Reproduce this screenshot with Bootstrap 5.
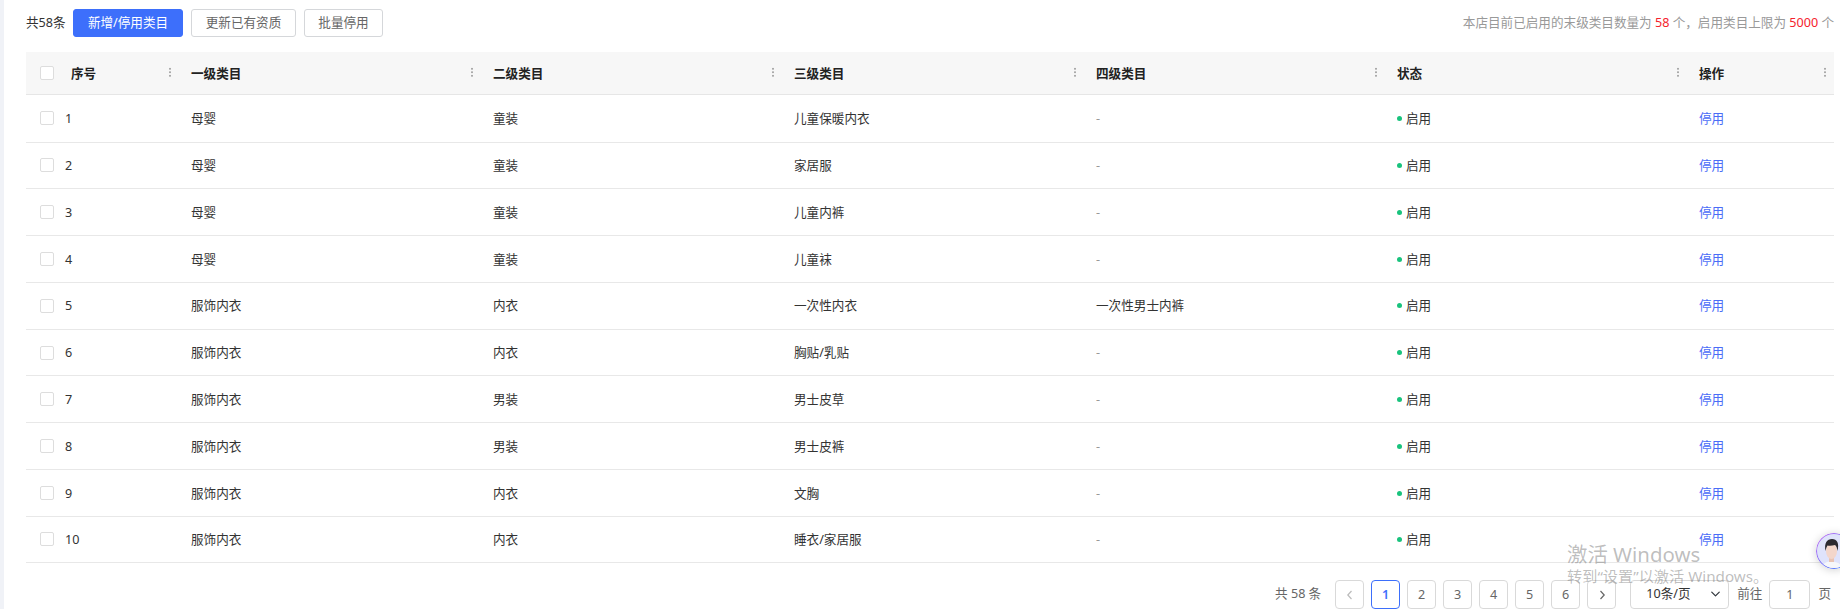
<!DOCTYPE html>
<html lang="zh">
<head>
<meta charset="utf-8">
<title>类目</title>
<link href="https://cdn.jsdelivr.net/npm/bootstrap@5.3.0/dist/css/bootstrap.min.css" rel="stylesheet">
<style>
html,body{height:609px;overflow:hidden}
body{font-family:"Noto Sans","Noto Sans CJK SC",sans-serif;font-size:12.6px;color:#333;background:#fff;position:relative}
.strip{width:4px;background:#f0f2f7;flex:none}
.main{padding:9px 6px 0 22px;flex:1;min-width:0}
.toolbar{height:28px;margin-bottom:15px}
.count{margin-right:8px;width:39px;white-space:nowrap}
.btn-s{font-size:12.6px;height:28px;padding:0;line-height:26px;border-radius:3px;border:1px solid #d5d7da;color:#666;background:#fff}
.btn-p{background:#3d6ffb;border-color:#3d6ffb;color:#fff;width:110px}
.w105{width:105px}.w79{width:79px}
.tip{color:#999}.tip b{color:#f5222d;font-weight:400}
.cat{table-layout:fixed;width:1808px;margin:0;font-size:12.6px;--bs-table-color:#333}
.cat th{height:42px;background:#f7f7f7;font-weight:700;color:#222;padding:3px 12px 0;border-bottom:1px solid #e6e6e6;position:relative;vertical-align:middle}
.cat td{height:46.8px;padding:2px 12px 0;border-bottom:1px solid #e8e8e8;vertical-align:middle}
.cat tbody tr:first-child td{height:48px}
.cat tbody tr:last-child td{height:46px}
.cat .c0{padding:0 12px 0 14px}
.box{width:14px;height:14px;border:1px solid #ddd;border-radius:2px;background:#fff;flex:none;display:block}
.num{padding-top:2px}
th .num{margin-left:17px;padding-top:3px}td .num{margin-left:11px}
.grip{position:absolute;right:8px;top:15px;width:2px;height:10px;background-image:radial-gradient(circle,#aaa 1px,transparent 1px);background-size:2px 3.5px}
.dash{color:#999}
.dot{width:5px;height:5px;border-radius:50%;background:#19c37d;display:inline-block;margin-right:4px;vertical-align:2px}
.op{color:#4a6cf7;text-decoration:none}
.foot{margin-top:17px;height:29px;padding-right:3px;color:#666}
.foot .pagination{--bs-pagination-font-size:12.6px;gap:7px;margin:0 0 0 14px}
.foot .page-link{width:29px;height:29px;padding:0;line-height:27px;text-align:center;color:#666;border:1px solid #d9d9d9;border-radius:4px!important;margin:0!important;background:#fff}
.foot .active .page-link{color:#3d6ffb;border-color:#3d6ffb;background:#fff;font-weight:600}
.foot .disabled .page-link{color:#bbb}
.foot svg{display:inline-block;vertical-align:-1px}
.foot .form-select{width:99px;height:29px;font-size:12.6px;padding:0 0 0 15px;margin-left:14px;border-color:#d9d9d9;border-radius:4px;color:#333;background-position:right 6px center;background-size:13px 10px}
.go{width:41px;height:29px;margin:0 8px 0 7px;font-size:12.6px;text-align:center;padding:0;border-color:#d9d9d9;border-radius:4px;color:#666}
.wm{position:absolute;left:1567px;top:544px;color:rgba(110,110,110,.45);pointer-events:none;line-height:1}
.wm .a{font-size:20.4px;margin-bottom:5px;white-space:nowrap}
.wm .b{font-size:15.2px;white-space:nowrap}
.ava{position:absolute;left:1816px;top:533px;width:36px;height:36px;border-radius:50%;box-shadow:0 1px 8px rgba(0,0,0,.18)}
</style>
</head>
<body class="d-flex">
<div class="strip"></div>
<div class="main">
  <div class="toolbar d-flex align-items-center">
    <span class="count">共58条</span>
    <button class="btn btn-s btn-p">新增/停用类目</button>
    <button class="btn btn-s w105 ms-2">更新已有资质</button>
    <button class="btn btn-s w79 ms-2">批量停用</button>
    <span class="tip ms-auto">本店目前已启用的末级类目数量为 <b>58</b> 个，启用类目上限为 <b>5000</b> 个</span>
  </div>
  <table class="table cat">
    <colgroup><col style="width:153px"><col style="width:302px"><col style="width:301px"><col style="width:302px"><col style="width:301px"><col style="width:302px"><col></colgroup>
    <thead><tr>
      <th class="c0"><div class="d-flex align-items-center"><span class="box"></span><span class="num">序号</span></div><i class="grip"></i></th>
      <th>一级类目<i class="grip"></i></th><th>二级类目<i class="grip"></i></th><th>三级类目<i class="grip"></i></th><th>四级类目<i class="grip"></i></th><th>状态<i class="grip"></i></th><th>操作<i class="grip"></i></th>
    </tr></thead>
    <tbody>
      <tr><td class="c0"><div class="d-flex align-items-center"><span class="box"></span><span class="num">1</span></div></td><td>母婴</td><td>童装</td><td>儿童保暖内衣</td><td class="dash">-</td><td><i class="dot"></i>启用</td><td><a class="op" href="#">停用</a></td></tr>
      <tr><td class="c0"><div class="d-flex align-items-center"><span class="box"></span><span class="num">2</span></div></td><td>母婴</td><td>童装</td><td>家居服</td><td class="dash">-</td><td><i class="dot"></i>启用</td><td><a class="op" href="#">停用</a></td></tr>
      <tr><td class="c0"><div class="d-flex align-items-center"><span class="box"></span><span class="num">3</span></div></td><td>母婴</td><td>童装</td><td>儿童内裤</td><td class="dash">-</td><td><i class="dot"></i>启用</td><td><a class="op" href="#">停用</a></td></tr>
      <tr><td class="c0"><div class="d-flex align-items-center"><span class="box"></span><span class="num">4</span></div></td><td>母婴</td><td>童装</td><td>儿童袜</td><td class="dash">-</td><td><i class="dot"></i>启用</td><td><a class="op" href="#">停用</a></td></tr>
      <tr><td class="c0"><div class="d-flex align-items-center"><span class="box"></span><span class="num">5</span></div></td><td>服饰内衣</td><td>内衣</td><td>一次性内衣</td><td>一次性男士内裤</td><td><i class="dot"></i>启用</td><td><a class="op" href="#">停用</a></td></tr>
      <tr><td class="c0"><div class="d-flex align-items-center"><span class="box"></span><span class="num">6</span></div></td><td>服饰内衣</td><td>内衣</td><td>胸贴/乳贴</td><td class="dash">-</td><td><i class="dot"></i>启用</td><td><a class="op" href="#">停用</a></td></tr>
      <tr><td class="c0"><div class="d-flex align-items-center"><span class="box"></span><span class="num">7</span></div></td><td>服饰内衣</td><td>男装</td><td>男士皮草</td><td class="dash">-</td><td><i class="dot"></i>启用</td><td><a class="op" href="#">停用</a></td></tr>
      <tr><td class="c0"><div class="d-flex align-items-center"><span class="box"></span><span class="num">8</span></div></td><td>服饰内衣</td><td>男装</td><td>男士皮裤</td><td class="dash">-</td><td><i class="dot"></i>启用</td><td><a class="op" href="#">停用</a></td></tr>
      <tr><td class="c0"><div class="d-flex align-items-center"><span class="box"></span><span class="num">9</span></div></td><td>服饰内衣</td><td>内衣</td><td>文胸</td><td class="dash">-</td><td><i class="dot"></i>启用</td><td><a class="op" href="#">停用</a></td></tr>
      <tr><td class="c0"><div class="d-flex align-items-center"><span class="box"></span><span class="num">10</span></div></td><td>服饰内衣</td><td>内衣</td><td>睡衣/家居服</td><td class="dash">-</td><td><i class="dot"></i>启用</td><td><a class="op" href="#">停用</a></td></tr>
    </tbody>
  </table>
  <div class="foot d-flex align-items-center justify-content-end">
    <span>共 58 条</span>
    <ul class="pagination">
      <li class="page-item disabled"><a class="page-link" href="#"><svg width="8" height="10" viewBox="0 0 8 10" fill="none" stroke="currentColor" stroke-width="1.2"><path d="M5.5 1 1.800 5l3.700 4"/></svg></a></li>
      <li class="page-item active"><a class="page-link" href="#">1</a></li>
      <li class="page-item"><a class="page-link" href="#">2</a></li>
      <li class="page-item"><a class="page-link" href="#">3</a></li>
      <li class="page-item"><a class="page-link" href="#">4</a></li>
      <li class="page-item"><a class="page-link" href="#">5</a></li>
      <li class="page-item"><a class="page-link" href="#">6</a></li>
      <li class="page-item"><a class="page-link" href="#"><svg width="8" height="10" viewBox="0 0 8 10" fill="none" stroke="currentColor" stroke-width="1.2"><path d="M2.500 1 6.200 5 2.500 9"/></svg></a></li>
    </ul>
    <select class="form-select"><option>10条/页</option></select>
    <span class="ms-2">前往</span>
    <input class="form-control go" value="1">
    <span>页</span>
  </div>
</div>
<div class="wm"><div class="a">激活 Windows</div><div class="b">转到“设置”以激活 Windows。</div></div>
<svg class="ava" viewBox="0 0 36 36">
  <defs><linearGradient id="g" x1="0" y1="0" x2="1" y2="1"><stop offset="0" stop-color="#c86bf0"/><stop offset="1" stop-color="#2f7bff"/></linearGradient><clipPath id="c"><circle cx="18" cy="18" r="17"/></clipPath></defs>
  <circle cx="18" cy="18" r="18" fill="url(#g)"/>
  <circle cx="18" cy="18" r="17" fill="#dfe3fb"/>
  <g clip-path="url(#c)">
    <path d="M5 37c.5-6 5-8.500 10.500-8.500S26 31 27 37z" fill="#f6f7fa"/>
    <rect x="13" y="23" width="5" height="6" fill="#e9c4b4"/>
    <ellipse cx="15.500" cy="18" rx="5.500" ry="8" fill="#f3d6ca"/>
    <path d="M9.500 18c-1.500-8 1.500-12 6.500-12s7.500 4 5.500 12c-.5-3-1-5-2.500-6-3 .8-5.500.8-7.500.5-1 1.500-1.500 3.500-2 5.500z" fill="#2b2a30"/>
  </g>
</svg>
<script src="https://cdn.jsdelivr.net/npm/bootstrap@5.3.0/dist/js/bootstrap.bundle.min.js"></script>
</body>
</html>
